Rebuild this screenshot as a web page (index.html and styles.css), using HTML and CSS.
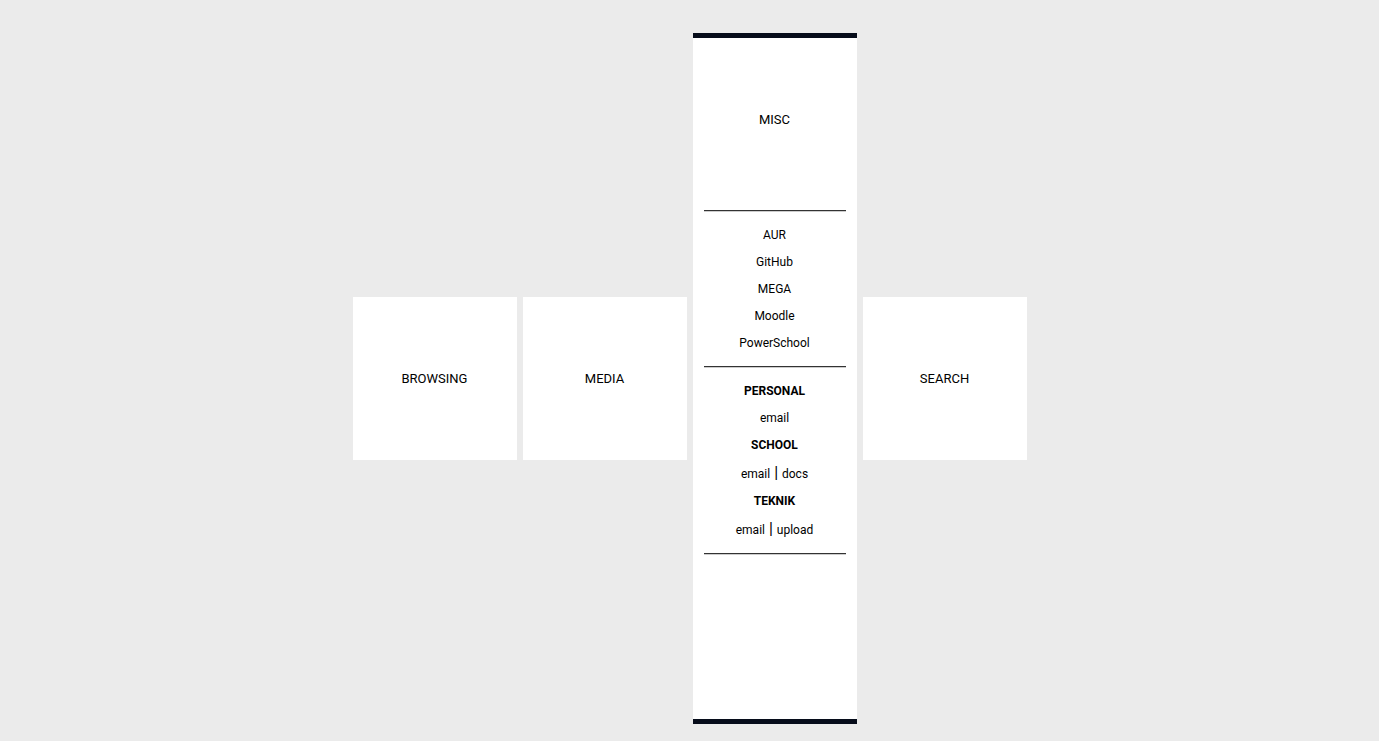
FILE: index.html
```html
<!DOCTYPE html>
<html lang="en">
<head>
<meta charset="utf-8">
<title>Start</title>
<link rel="stylesheet" href="styles.css">
</head>
<body>
<main class="tiles">
  <section class="tile"><h2 class="tile-title">BROWSING</h2></section>
  <section class="tile"><h2 class="tile-title">MEDIA</h2></section>
  <section class="tile tile-open">
    <h2 class="tile-title">MISC</h2>
    <hr class="rule">
    <ul class="links">
      <li><a href="#aur">AUR</a></li>
      <li><a href="#github">GitHub</a></li>
      <li><a href="#mega">MEGA</a></li>
      <li><a href="#moodle">Moodle</a></li>
      <li><a href="#powerschool">PowerSchool</a></li>
    </ul>
    <hr class="rule">
    <div class="links">
      <h3 class="group">PERSONAL</h3>
      <p><a href="#personal-email">email</a></p>
      <h3 class="group">SCHOOL</h3>
      <p class="pair"><a href="#school-email">email</a> | <a href="#docs">docs</a></p>
      <h3 class="group">TEKNIK</h3>
      <p class="pair"><a href="#teknik-email">email</a> | <a href="#upload">upload</a></p>
    </div>
    <hr class="rule">
  </section>
  <section class="tile"><h2 class="tile-title">SEARCH</h2></section>
</main>
</body>
</html>
```
FILE: styles.css
```css
* {
  box-sizing: border-box;
  margin: 0;
  padding: 0;
}

body {
  min-height: 100vh;
  display: flex;
  align-items: center;
  justify-content: center;
  padding-top: 16px;
  background: #ebebeb;
  color: #000;
  font-family: Roboto, sans-serif;
  font-size: 12px;
}

.tiles {
  display: flex;
  align-items: center;
  gap: 6px;
}

.tile {
  width: 164px;
  background: #fff;
  text-align: center;
}

.tile-title {
  font-size: 13px;
  font-weight: 400;
  line-height: 163px;
}

.tile-open {
  padding-bottom: 154px;
  border-top: 5px solid #060c1a;
  border-bottom: 5px solid #060c1a;
}

.rule {
  margin: 9px 11px 10px;
  border: 0;
  border-top: 1px solid #333;
  border-bottom: 1px solid #ccc;
}

.links {
  list-style: none;
  line-height: 27px;
}

.group {
  font-size: 12px;
  font-weight: 700;
}

.pair {
  font-size: 16px;
}

a {
  color: inherit;
  font-size: 12px;
  text-decoration: none;
}
```
